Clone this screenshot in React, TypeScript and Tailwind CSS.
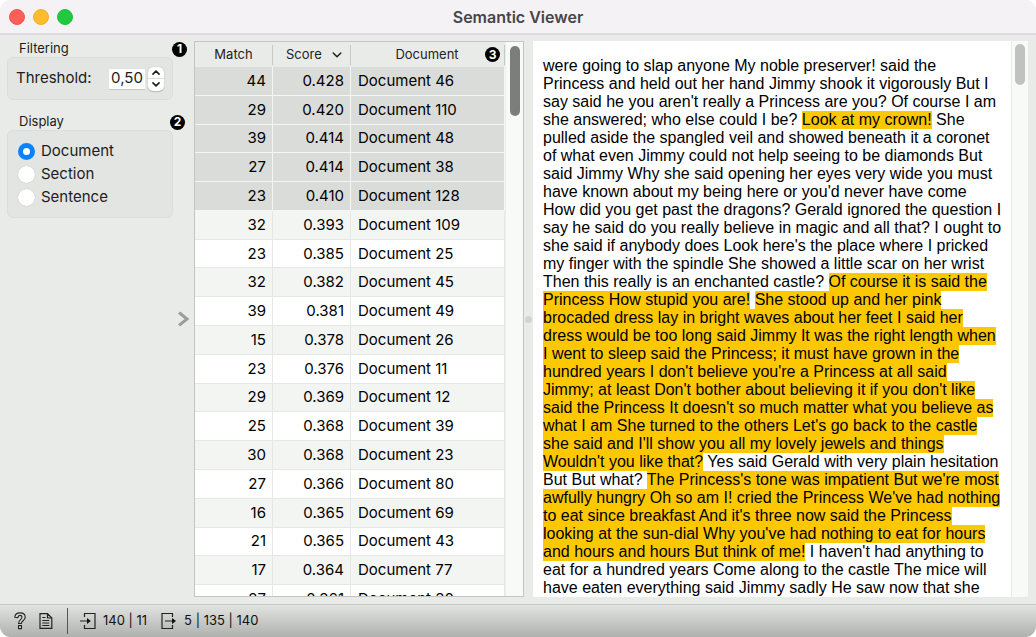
import React, { useState } from 'react';

type Row = { match: number; score: string; doc: string };

const rows: Row[] = [
  { match: 44, score: '0.428', doc: 'Document 46' },
  { match: 29, score: '0.420', doc: 'Document 110' },
  { match: 39, score: '0.414', doc: 'Document 48' },
  { match: 27, score: '0.414', doc: 'Document 38' },
  { match: 23, score: '0.410', doc: 'Document 128' },
  { match: 32, score: '0.393', doc: 'Document 109' },
  { match: 23, score: '0.385', doc: 'Document 25' },
  { match: 32, score: '0.382', doc: 'Document 45' },
  { match: 39, score: '0.381', doc: 'Document 49' },
  { match: 15, score: '0.378', doc: 'Document 26' },
  { match: 23, score: '0.376', doc: 'Document 11' },
  { match: 29, score: '0.369', doc: 'Document 12' },
  { match: 25, score: '0.368', doc: 'Document 39' },
  { match: 30, score: '0.368', doc: 'Document 23' },
  { match: 27, score: '0.366', doc: 'Document 80' },
  { match: 16, score: '0.365', doc: 'Document 69' },
  { match: 21, score: '0.365', doc: 'Document 43' },
  { match: 17, score: '0.364', doc: 'Document 77' },
  { match: 27, score: '0.361', doc: 'Document 30' },
];

const SELECTED = 5;

const passages: { text: string; hit?: boolean }[] = [
  {
    text: `were going to slap anyone My noble preserver! said the
Princess and held out her hand Jimmy shook it vigorously But I
say said he you aren't really a Princess are you? Of course I am
she answered; who else could I be? `,
  },
  { text: `Look at my crown!`, hit: true },
  {
    text: ` She
pulled aside the spangled veil and showed beneath it a coronet
of what even Jimmy could not help seeing to be diamonds But
said Jimmy Why she said opening her eyes very wide you must
have known about my being here or you'd never have come
How did you get past the dragons? Gerald ignored the question I
say he said do you really believe in magic and all that? I ought to
she said if anybody does Look here's the place where I pricked
my finger with the spindle She showed a little scar on her wrist
Then this really is an enchanted castle? `,
  },
  {
    text: `Of course it is said the
Princess How stupid you are!`,
    hit: true,
  },
  { text: ` ` },
  {
    text: `She stood up and her pink
brocaded dress lay in bright waves about her feet I said her
dress would be too long said Jimmy It was the right length when
I went to sleep said the Princess; it must have grown in the
hundred years I don't believe you're a Princess at all said
Jimmy; at least Don't bother about believing it if you don't like
said the Princess It doesn't so much matter what you believe as
what I am She turned to the others Let's go back to the castle
she said and I'll show you all my lovely jewels and things
Wouldn't you like that?`,
    hit: true,
  },
  {
    text: ` Yes said Gerald with very plain hesitation
But But what? `,
  },
  {
    text: `The Princess's tone was impatient But we're most
awfully hungry Oh so am I! cried the Princess We've had nothing
to eat since breakfast And it's three now said the Princess
looking at the sun-dial Why you've had nothing to eat for hours
and hours and hours But think of me!`,
    hit: true,
  },
  {
    text: ` I haven't had anything to
eat for a hundred years Come along to the castle The mice will
have eaten everything said Jimmy sadly He saw now that she`,
  },
];

function Badge({ n }: { n: number }) {
  return (
    <span className="flex size-[15px] shrink-0 items-center justify-center rounded-full bg-black text-[12px] leading-none font-bold text-white">
      {n}
    </span>
  );
}

function Chevron({ d, className }: { d: string; className: string }) {
  return (
    <svg viewBox="0 0 10 6" className={className} fill="none" stroke="currentColor" strokeLinecap="round" strokeLinejoin="round" aria-hidden="true">
      <path d={d} />
    </svg>
  );
}

const UP = 'M1.2 5 5 1.2 8.8 5';
const DOWN = 'M1.2 1 5 4.8 8.8 1';

function Filtering() {
  const [value, setValue] = useState('0,50');
  const step = (delta: number) => {
    const next = Math.min(1, Math.max(0, parseFloat(value.replace(',', '.')) + delta));
    setValue(next.toFixed(2).replace('.', ','));
  };
  return (
    <section>
      <header className="flex h-4 items-center justify-between pr-[7px] pl-[19px]">
        <h2 className="text-[13px]">Filtering</h2>
        <Badge n={1} />
      </header>
      <div className="mr-[21px] ml-[7px] flex h-[43px] items-center rounded-md border border-[#dcdedb] bg-[#e3e5e2] pr-2 pl-2">
        <label htmlFor="threshold" className="flex-1 text-[15px]">
          Threshold:
        </label>
        <input
          id="threshold"
          value={value}
          onChange={(e) => setValue(e.target.value)}
          className="h-5 w-[36px] bg-white text-center text-[15px] shadow-[0_1px_0_#c4c6c3] outline-none"
        />
        <div className="ml-[3px] flex h-6 w-4 flex-col rounded-[5px] bg-white shadow-[0_0_1px_#999,0_1px_1px_#bbb]">
          <button type="button" aria-label="Increase" onClick={() => step(0.05)} className="flex flex-1 items-center justify-center border-b border-[#dcdcdc]">
            <Chevron d={UP} className="h-[5px] w-2 stroke-2" />
          </button>
          <button type="button" aria-label="Decrease" onClick={() => step(-0.05)} className="flex flex-1 items-center justify-center">
            <Chevron d={DOWN} className="h-[5px] w-2 stroke-2" />
          </button>
        </div>
      </div>
    </section>
  );
}

function Display() {
  const [unit, setUnit] = useState('Document');
  return (
    <section className="mt-[14px]">
      <header className="flex h-4 items-center justify-between pr-[9px] pl-[19px]">
        <h2 className="text-[13px]">Display</h2>
        <Badge n={2} />
      </header>
      <div className="mr-[21px] ml-[7px] rounded-md border border-[#dcdedb] bg-[#e3e5e2] px-[10px] pt-[9px] pb-2">
        {['Document', 'Section', 'Sentence'].map((name) => (
          <label key={name} className="flex h-[23px] items-center gap-[6px] text-[15px]">
            <input
              type="radio"
              name="unit"
              checked={unit === name}
              onChange={() => setUnit(name)}
              className="size-[17px] appearance-none rounded-full bg-white shadow-[0_0_1px_#aaa] checked:border-[5px] checked:border-[#0a82ff] checked:shadow-none"
            />
            {name}
          </label>
        ))}
      </div>
    </section>
  );
}

function Results() {
  return (
    <div className="flex w-[330px] shrink-0 overflow-hidden border border-[#c3c5c2] bg-[#f8faf7]">
      <div className="min-h-0 flex-1 overflow-hidden">
        <table className="h-[572px] w-full table-fixed border-separate border-spacing-0 text-[15px] text-black">
          <colgroup>
            <col className="w-[78px]" />
            <col className="w-[78px]" />
            <col />
          </colgroup>
          <thead>
            <tr className="h-[25px] bg-[#e9ebe8] text-[13px] text-[#222]">
              <th className="p-0 font-normal">
                <div className="flex h-5 items-center justify-center border-r border-[#c6c8c5]">Match</div>
              </th>
              <th className="p-0 font-normal">
                <button type="button" className="flex h-5 w-full items-center justify-between border-r border-[#c6c8c5] pr-2 pl-[13px]">
                  Score
                  <Chevron d={DOWN} className="h-[6px] w-[10px] stroke-[1.5]" />
                </button>
              </th>
              <th className="p-0 font-normal">
                <div className="flex h-5 items-center border-r border-[#c6c8c5] pr-1">
                  <span className="flex-1 pl-[18px] text-center">Document</span>
                  <Badge n={3} />
                </div>
              </th>
            </tr>
          </thead>
          <tbody>
            {rows.map((r, i) => {
              const tone =
                i < SELECTED
                  ? 'bg-[#dadcd9] *:border-[#f4f6f3]'
                  : i % 2
                    ? 'bg-[#f3f5f2] *:border-[#e6e8e5]'
                    : 'bg-white *:border-[#e6e8e5]';
              return (
                <tr key={r.doc} className={tone}>
                  <td className="border-r border-b py-0 pr-[6px] pl-0 text-right leading-5">{r.match}</td>
                  <td className="border-r border-b py-0 pr-[6px] pl-0 text-right leading-5">{r.score}</td>
                  <td className="border-r border-b py-0 pr-0 pl-[7px] leading-5">{r.doc}</td>
                </tr>
              );
            })}
          </tbody>
        </table>
      </div>
      <div className="flex w-[18px] justify-center border-l border-[#eceeeb] pt-1">
        <div className="h-[70px] w-[10px] rounded-full bg-[#7c7e7b]" />
      </div>
    </div>
  );
}

function Reader() {
  return (
    <div className="flex min-w-0 flex-1 overflow-hidden bg-white">
      <p className="min-w-0 flex-1 overflow-hidden pt-4 pl-[10px] font-['Liberation_Sans',Arial,sans-serif] text-[16px] leading-[18px] whitespace-pre text-black">
        {passages.map((p, i) =>
          p.hit ? (
            <mark key={i} className="bg-[#fec800] pb-px text-black">
              {p.text}
            </mark>
          ) : (
            <span key={i}>{p.text}</span>
          ),
        )}
      </p>
      <div className="flex w-[17px] justify-center border-l border-[#e8eae7] bg-[#f8faf7] pt-[3px]">
        <div className="h-[41px] w-[10px] rounded-full bg-[#c0c2bf]" />
      </div>
    </div>
  );
}

function StatusBar() {
  return (
    <footer className="flex h-[33px] shrink-0 items-center border-t border-[#c6c8c5] bg-linear-to-b from-[#e2e4e1] to-[#afb1ae] pl-[14px] text-[13px] text-[#111]">
      <button type="button" aria-label="Help">
        <svg viewBox="0 0 12 18" className="h-[18px] w-3" fill="#d8dad7" stroke="#222" strokeWidth="1.1" strokeLinejoin="round" aria-hidden="true">
          <path d="M.8 5.200C1 2.300 3 .9 6 .9c3.200 0 5.200 1.700 5.200 4.300 0 3.500-3.900 3.500-3.900 6.300H4.600C4.600 7.800 8 7.700 8 5.300c0-1.100-.7-1.900-2-1.900-1.400 0-2 .8-2.200 2.200z" />
          <rect x="4.500" y="13.600" width="3" height="3" />
        </svg>
      </button>
      <button type="button" aria-label="Report" className="ml-[13px]">
        <svg viewBox="0 0 14 18" className="h-[18px] w-[14px]" fill="none" stroke="#222" strokeWidth="1.200" aria-hidden="true">
          <path d="M1 1.600h7.500L12.800 6v10.400H1zM8.500 1.600V6h4.300M3.300 5.500h3.200M3.300 8.500h7M3.300 11h7M3.300 13.500h7" />
        </svg>
      </button>
      <span className="ml-[14px] h-[26px] w-px bg-[#555]" />
      <svg viewBox="0 0 16 18" className="ml-3 h-[18px] w-4" fill="none" stroke="#222" strokeWidth="1.2" aria-hidden="true">
        <path d="M4.500 5V1.500H15v15H4.500V13M0 9h9" />
        <path d="M7 6 10.800 9 7 12z" fill="#111" stroke="none" />
      </svg>
      <span className="ml-[7px]">140 | 11</span>
      <svg viewBox="0 0 16 18" className="ml-[14px] h-[18px] w-4" fill="none" stroke="#222" strokeWidth="1.2" aria-hidden="true">
        <path d="M11.500 5V1.500H1v15h10.500V13M4 9h9" />
        <path d="M11 6 15 9l-4 3z" fill="#111" stroke="none" />
      </svg>
      <span className="ml-[7px]">5 | 135 | 140</span>
    </footer>
  );
}

export default function App() {
  return (
    <div className="h-screen bg-white">
      <div className="flex h-full flex-col overflow-hidden rounded-[11px] bg-[#e9ebe8] font-[Inter,sans-serif] text-[#1c1c1c]">
        <header className="grid h-[35px] shrink-0 grid-cols-[1fr_auto_1fr] items-center border-b-2 border-[#dddbde] bg-[#f4f2f5] px-[9px]">
          <div className="flex gap-2">
            <button type="button" aria-label="Close" className="size-4 rounded-full border border-[#f0554b] bg-[#ff5f57]" />
            <button type="button" aria-label="Minimize" className="size-4 rounded-full border border-[#f0ae28] bg-[#febc2e]" />
            <button type="button" aria-label="Zoom" className="size-4 rounded-full border border-[#1fc037] bg-[#20c93f]" />
          </div>
          <h1 className="text-[16px] font-semibold text-[#474548]">Semantic Viewer</h1>
        </header>
        <main className="flex min-h-0 flex-1 pt-[6px] pr-2 pb-[7px]">
          <aside className="relative w-[194px] shrink-0">
            <Filtering />
            <Display />
            <button type="button" aria-label="Toggle sidebar" className="absolute top-1/2 right-[4px] -translate-y-1/2 text-[#9b9d9a]">
              <svg viewBox="0 0 12 16" className="h-4 w-3" fill="none" stroke="currentColor" strokeWidth="3" strokeLinecap="square" aria-hidden="true">
                <path d="M2.200 2.500 9 8l-6.800 5.500" />
              </svg>
            </button>
          </aside>
          <Results />
          <div className="flex w-[9px] shrink-0 items-center justify-center">
            <span className="size-[7px] rounded-full bg-[#d2d4d1]" />
          </div>
          <Reader />
        </main>
        <StatusBar />
      </div>
    </div>
  );
}
